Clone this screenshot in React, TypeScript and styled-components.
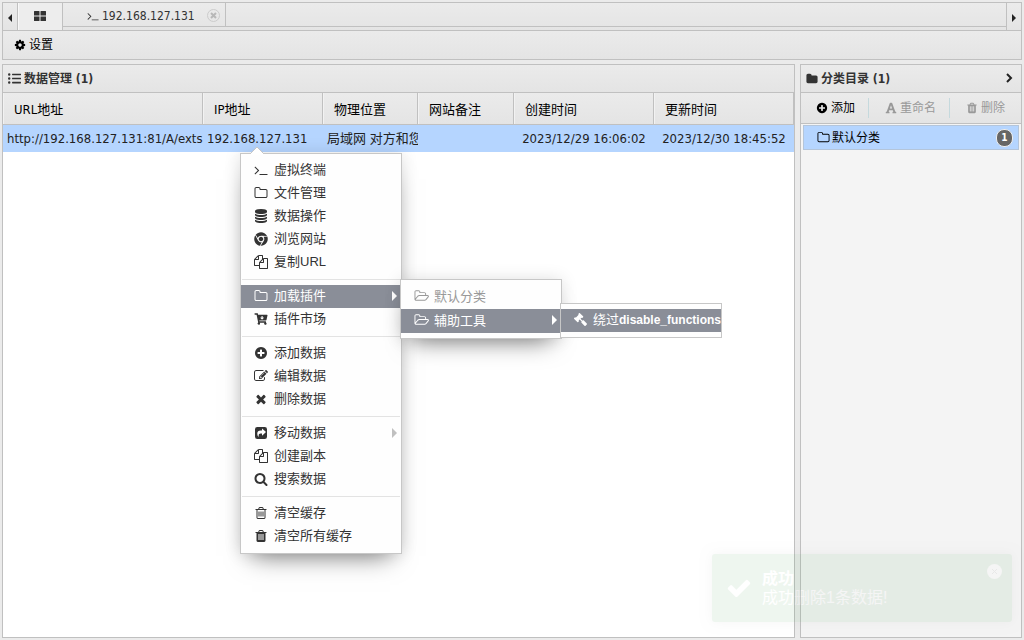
import React from 'react';
import styled, { createGlobalStyle, css } from 'styled-components';
import { FaCartArrowDown, FaChrome, FaFont, FaGavel, FaListUl } from 'react-icons/fa';

const line = '#c0c0c0';
const selected = '#b5d5ff';
const bar = 'linear-gradient(#ebebeb, #e4e4e4)';
const ui = "'DejaVu Sans Condensed', 'Noto Sans CJK SC', sans-serif";
const menuFont = "'Liberation Sans', 'Noto Sans CJK SC', sans-serif";

const Global = createGlobalStyle`
  * { box-sizing: border-box; }
  body { margin: 0; background: #ebebeb; font: 12px/16px ${ui}; color: #333; overflow: hidden; }
  button { font: inherit; color: inherit; background: none; border: 0; padding: 0; margin: 0; }
  h2, p { margin: 0; padding: 0; font: inherit; }
`;

const paths = {
  terminal: 'M649 983l-466 466q-10 10-23 10t-23-10l-50-50q-10-10-10-23t10-23l393-393-393-393q-10-10-10-23t10-23l50-50q10-10 23-10t23 10l466 466q10 10 10 23t-10 23zm1079 457v64q0 14-9 23t-23 9h-960q-14 0-23-9t-9-23v-64q0-14 9-23t23-9h960q14 0 23 9t9 23z',
  folderO: 'M1600 1312v-704q0-40-28-68t-68-28h-704q-40 0-68-28t-28-68v-64q0-40-28-68t-68-28h-320q-40 0-68 28t-28 68v960q0 40 28 68t68 28h1216q40 0 68-28t28-68zm128-704v704q0 92-66 158t-158 66h-1216q-92 0-158-66t-66-158v-960q0-92 66-158t158-66h320q92 0 158 66t66 158v32h672q92 0 158 66t66 158z',
  folder: 'M1728 608v704q0 92-66 158t-158 66h-1216q-92 0-158-66t-66-158v-960q0-92 66-158t158-66h320q92 0 158 66t66 158v32h672q92 0 158 66t66 158z',
  folderOpen: 'M1845 931q0-35-53-35h-1088q-40 0-85.500 21.500t-71.500 52.500l-294 363q-18 24-18 40 0 35 53 35h1088q40 0 86-22t71-53l294-363q18-22 18-39zm-1141-163h768v-160q0-40-28-68t-68-28h-576q-40 0-68-28t-28-68v-64q0-40-28-68t-68-28h-320q-40 0-68 28t-28 68v853l256-315q44-53 116-87.500t140-34.500zm1269 163q0 62-46 120l-295 363q-43 53-116 87.500t-140 34.500h-1088q-92 0-158-66t-66-158v-960q0-92 66-158t158-66h320q92 0 158 66t66 158v32h544q92 0 158 66t66 158v160h192q54 0 99 24.500t67 70.500q15 32 15 68z',
  database: 'M896 768q237 0 443-43t325-127v170q0 69-103 128t-280 93.500-385 34.500-385-34.500-280-93.500-103-128v-170q119 84 325 127t443 43zm0 768q237 0 443-43t325-127v170q0 69-103 128t-280 93.500-385 34.500-385-34.500-280-93.500-103-128v-170q119 84 325 127t443 43zm0-384q237 0 443-43t325-127v170q0 69-103 128t-280 93.500-385 34.500-385-34.500-280-93.500-103-128v-170q119 84 325 127t443 43zm0-1152q208 0 385 34.500t280 93.500 103 128v128q0 69-103 128t-280 93.500-385 34.500-385-34.500-280-93.500-103-128v-128q0-69 103-128t280-93.500 385-34.500z',
  copy: 'M1696 384q40 0 68 28t28 68v1216q0 40-28 68t-68 28h-960q-40 0-68-28t-28-68v-288h-544q-40 0-68-28t-28-68v-672q0-40 20-88t48-76l408-408q28-28 76-48t88-20h416q40 0 68 28t28 68v328q68-40 128-40h416zm-544 213l-299 299h299v-299zm-640-384l-299 299h299v-299zm196 647l316-316v-416h-384v416q0 40-28 68t-68 28h-416v640h512v-256q0-40 20-88t48-76zm956 804v-1152h-384v416q0 40-28 68t-68 28h-416v640h896z',
  plus: 'M1344 960v-128q0-26-19-45t-45-19h-256v-256q0-26-19-45t-45-19h-128q-26 0-45 19t-19 45v256h-256q-26 0-45 19t-19 45v128q0 26 19 45t45 19h256v256q0 26 19 45t45 19h128q26 0 45-19t19-45v-256h256q26 0 45-19t19-45zm320-64q0 209-103 385.500t-279.500 279.500-385.500 103-385.500-103-279.500-279.500-103-385.500 103-385.500 279.500-279.500 385.500-103 385.500 103 279.500 279.500 103 385.500z',
  edit: 'M888 1184l116-116-152-152-116 116v56h96v96h56zm440-720q-16-16-33 1l-350 350q-17 17-1 33t33-1l350-350q17-17 1-33zm80 594v190q0 119-84.500 203.500t-203.500 84.500h-832q-119 0-203.500-84.500t-84.500-203.500v-832q0-119 84.500-203.500t203.500-84.500h832q63 0 117 25 15 7 18 23 3 17-9 29l-49 49q-14 14-32 8-23-6-45-6h-832q-66 0-113 47t-47 113v832q0 66 47 113t113 47h832q66 0 113-47t47-113v-126q0-13 9-22l64-64q15-15 35-7t20 29zm-96-738l288 288-672 672h-288v-288zm444 132l-92 92-288-288 92-92q28-28 68-28t68 28l152 152q28 28 28 68t-28 68z',
  times: 'M1490 1322q0 40-28 68l-136 136q-28 28-68 28t-68-28l-294-294-294 294q-28 28-68 28t-68-28l-136-136q-28-28-28-68t28-68l294-294-294-294q-28-28-28-68t28-68l136-136q28-28 68-28t68 28l294 294 294-294q28-28 68-28t68 28l136 136q28 28 28 68t-28 68l-294 294 294 294q28 28 28 68z',
  share: 'M416 128h960q288 0 288 288v960q0 288-288 288h-960q-288 0-288-288v-960q0-288 288-288zm608 224v224h-160q-448 0-448 416 0 224 160 384 24 16 32-16-80-400 256-400h160v224q0 48 40 16l440-400q32-32 0-64l-440-400q-40-32-40 16z',
  search: 'M1216 832q0-185-131.500-316.500t-316.500-131.500-316.500 131.500-131.500 316.500 131.500 316.500 316.500 131.500 316.500-131.500 131.500-316.500zm512 832q0 52-38 90t-90 38q-54 0-90-38l-343-342q-179 124-399 124-143 0-273.500-55.500t-225-150-150-225-55.500-273.500 55.500-273.500 150-225 225-150 273.500-55.500 273.500 55.500 225 150 150 225 55.500 273.500q0 220-124 399l343 343q37 37 37 90z',
  trashO: 'M704 736v576q0 14-9 23t-23 9h-64q-14 0-23-9t-9-23v-576q0-14 9-23t23-9h64q14 0 23 9t9 23zm256 0v576q0 14-9 23t-23 9h-64q-14 0-23-9t-9-23v-576q0-14 9-23t23-9h64q14 0 23 9t9 23zm256 0v576q0 14-9 23t-23 9h-64q-14 0-23-9t-9-23v-576q0-14 9-23t23-9h64q14 0 23 9t9 23zm128 724v-948h-896v948q0 22 7 40.500t14.500 27 10.500 8.500h832q3 0 10.500-8.500t14.500-27 7-40.500zm-672-1076h448l-48-117q-7-9-17-11h-317q-10 2-17 11zm928 32v64q0 14-9 23t-23 9h-96v948q0 83-47 143.500t-113 60.500h-832q-66 0-113-58.500t-47-141.500v-952h-96q-14 0-23-9t-9-23v-64q0-14 9-23t23-9h309l70-167q15-37 54-63t79-26h320q40 0 79 26t54 63l70 167h309q14 0 23 9t9 23z',
  trash: 'M704 1376v-704q0-14-9-23t-23-9h-64q-14 0-23 9t-9 23v704q0 14 9 23t23 9h64q14 0 23-9t9-23zm256 0v-704q0-14-9-23t-23-9h-64q-14 0-23 9t-9 23v704q0 14 9 23t23 9h64q14 0 23-9t9-23zm256 0v-704q0-14-9-23t-23-9h-64q-14 0-23 9t-9 23v704q0 14 9 23t23 9h64q14 0 23-9t9-23zm-544-992h448l-48-117q-7-9-17-11h-317q-10 2-17 11zm928 32v64q0 14-9 23t-23 9h-96v948q0 83-47 143.500t-113 60.500h-832q-66 0-113-58.500t-47-141.500v-952h-96q-14 0-23-9t-9-23v-64q0-14 9-23t23-9h309l70-167q15-37 54-63t79-26h320q40 0 79 26t54 63l70 167h309q14 0 23 9t9 23z',
  check: 'M1671 566q0 40-28 68l-724 724-136 136q-28 28-68 28t-68-28l-136-136-362-362q-28-28-28-68t28-68l136-136q28-28 68-28t68 28l294 295 656-657q28-28 68-28t68 28l136 136q28 28 28 68z',
  cog: 'M1152 896q0-106-75-181t-181-75-181 75-75 181 75 181 181 75 181-75 75-181zm512-109v222q0 12-8 23t-20 13l-185 28q-19 54-39 91 35 50 107 138 10 12 10 25t-9 23q-27 37-99 108t-94 71q-12 0-26-9l-138-108q-44 23-91 38-16 136-29 186-7 28-36 28h-222q-14 0-24.500-8.500t-11.500-21.500l-28-184q-49-16-90-37l-141 107q-10 9-25 9-14 0-25-11-126-114-165-168-7-10-7-23 0-12 8-23 15-21 51-66.500t54-70.500q-27-50-41-99l-183-27q-13-2-21-12.500t-8-23.500v-222q0-12 8-23t19-13l186-28q14-46 39-92-40-57-107-138-10-12-10-24 0-10 9-23 26-36 98.500-107.500t94.500-71.500q13 0 26 10l138 107q44-23 91-38 16-136 29-186 7-28 36-28h222q14 0 24.500 8.500t11.500 21.500l28 184q49 16 90 37l142-107q9-9 24-9 13 0 25 10 129 119 165 170 7 8 7 22 0 12-8 23-15 21-51 66.500t-54 70.500q26 50 41 98l183 28q13 2 21 12.500t8 23.500z',
  grid: 'M192 256h576q64 0 64 64v512h-704v-512q0-64 64-64zM1024 256h576q64 0 64 64v512h-704v-512q0-64 64-64zM128 960h704v512q0 64-64 64h-576q-64 0-64-64zM960 960h704v512q0 64-64 64h-576q-64 0-64-64z',
};
type Name = keyof typeof paths;

const Svg = styled.svg`
  flex: none;
  display: block;
  fill: currentColor;
`;
function Icon({ name, size = 14 }: { name: Name; size?: number }) {
  const wide = name === 'folderOpen';
  return (
    <Svg width={wide ? size + 1 : size} height={size} viewBox={wide ? '0 0 1984 1792' : '0 0 1792 1792'} fillRule="evenodd" aria-hidden="true">
      <path d={paths[name]} />
    </Svg>
  );
}

const Page = styled.div`
  position: relative;
  height: 100vh;
  padding: 2px;
  display: flex;
  flex-direction: column;
`;

const TabBar = styled.nav`
  display: flex;
  height: 28px;
  border: 1px solid ${line};
  border-bottom: 0;
  background: ${bar};
`;
const Scroller = styled.button<{ $side: 'left' | 'right' }>`
  width: 15px;
  padding-top: 2px;
  display: flex;
  align-items: center;
  justify-content: center;
  ${p => (p.$side === 'left' ? 'border-right' : 'border-left')}: 1px solid ${line};
`;
const Tab = styled.button<{ $active?: boolean }>`
  display: flex;
  align-items: center;
  height: ${p => (p.$active ? 27 : 24)}px;
  border-right: 1px solid ${line};
  ${p =>
    p.$active
      ? css`
          width: 45px;
          padding-bottom: 2px;
          justify-content: center;
          background: #ededed;
          box-shadow: inset 1px 0 #f8f8f8;
        `
      : css`
          border-bottom: 1px solid ${line};
          padding: 2px 5px 0 24px;
          gap: 3px;
          width: 163px;
        `}
`;
const TabClose = styled.span`
  margin-left: auto;
  width: 13px;
  height: 13px;
  display: grid;
  place-items: center;
  border: 1px solid #ccc;
  border-radius: 50%;
  color: #b8b8b8;
`;
const TabRest = styled.div`
  flex: 1;
  height: 24px;
  border-bottom: 1px solid ${line};
`;

const Toolbar = styled.div`
  height: 30px;
  padding: 0 11px;
  border: 1px solid ${line};
  background: ${bar};
  display: flex;
  align-items: center;
`;
const ToolButton = styled.button`
  display: flex;
  align-items: center;
  gap: 3px;
  color: #000;
  &:disabled { color: #999; }
`;

const Main = styled.main`
  flex: 1;
  min-height: 0;
  margin-top: 4px;
  display: flex;
  gap: 5px;
`;
const Panel = styled.section<{ $side?: boolean }>`
  flex: ${p => (p.$side ? '0 0 222px' : '1')};
  min-width: 0;
  border: 1px solid ${line};
  background: ${p => (p.$side ? '#f4f4f4' : '#fff')};
`;
const PanelHead = styled.header`
  height: 28px;
  padding: 0 7px 0 5px;
  display: flex;
  align-items: center;
  gap: 3px;
  background: ${bar};
  border-bottom: 1px solid ${line};
  h2 { font-weight: 700; }
  button { margin-left: auto; }
`;

const Grid = styled.table`
  width: 100%;
  table-layout: fixed;
  border-collapse: separate;
  border-spacing: 0;
  font-size: 13px;
  color: #000;
  th {
    height: 32px;
    padding: 2px 11px 0;
    text-align: left;
    font-weight: 400;
    background: ${bar};
    border-right: 1px solid ${line};
    border-bottom: 1px solid ${line};
    box-shadow: inset 1px 0 #f2f2f2;
  }
  td {
    height: 27px;
    padding: 0;
    background: ${selected};
    white-space: nowrap;
    overflow: hidden;
    color: #222;
  }
`;
const TextCell = styled.td`
  && { padding-left: 4px; }
`;
const DateCell = styled.td`
  text-align: center;
`;

const SideTools = styled.div`
  height: 31px;
  padding: 0 15px;
  display: flex;
  align-items: center;
  background: ${bar};
  border-bottom: 1px solid ${line};
`;
const Rule = styled.span`
  width: 1px;
  height: 20px;
  margin: 0 16px 0 13px;
  background: #c5d9dd;
`;
const Category = styled.button`
  width: calc(100% - 4px);
  height: 25px;
  margin: 1px 2px;
  padding: 0 5px 0 13px;
  display: flex;
  align-items: center;
  gap: 2px;
  color: #000;
  background: ${selected};
  border: 1px solid #b4c5da;
`;
const Badge = styled.span`
  margin-left: auto;
  width: 17px;
  height: 18px;
  border: 1px solid #eee;
  border-radius: 8px;
  background: #666;
  color: #fff;
  font: bold 10px/16px ${ui};
  text-align: center;
`;

const Menu = styled.div<{ $x: number; $y: number; $flat?: boolean }>`
  position: absolute;
  left: ${p => p.$x}px;
  top: ${p => p.$y}px;
  width: 162px;
  padding: 5px 0;
  border: 1px solid #c7c7c7;
  background: #fefefe;
  font: 13px/21px ${menuFont};
  box-shadow: ${p => (p.$flat ? 'none' : '0 0 16px rgba(0, 0, 0, 0.12), 0 14px 24px -12px rgba(0, 0, 0, 0.5)')};
`;
const Notch = styled.svg`
  position: absolute;
  left: 9px;
  top: -7px;
`;
const Item = styled.button<{ $on?: boolean }>`
  width: 100%;
  height: 23px;
  padding: 0 3px 2px 13px;
  display: flex;
  align-items: center;
  gap: 6px;
  white-space: nowrap;
  color: ${p => (p.$on ? '#fff' : '#333')};
  background: ${p => (p.$on ? '#8a8e98' : 'transparent')};
  &:disabled { color: #999; }
  svg { flex: none; }
`;
const SubItem = styled(Item)`
  height: 24px;
  gap: 5px;
`;
const PluginItem = styled(Item)`
  padding-right: 0;
  b { font-size: 12px; }
`;
const Gavel = styled(FaGavel)`
  transform: scaleX(-1);
`;
const Arrow = styled.svg`
  margin-left: auto;
  fill: currentColor;
`;
const Divider = styled.hr`
  height: 1px;
  margin: 5px 1px;
  border: 0;
  background: #e3e3e3;
`;

const Toast = styled.aside`
  position: absolute;
  right: 12px;
  bottom: 18px;
  width: 300px;
  height: 68px;
  padding: 15px 15px 15px 14px;
  display: flex;
  align-items: center;
  gap: 10px;
  border-radius: 3px;
  background: #51a35a;
  color: #fff;
  opacity: 0.09;
  box-shadow: 0 0 12px #999;
  font: 16px/19px ${menuFont};
  strong { display: block; }
`;
const ToastClose = styled.button`
  align-self: flex-start;
  margin: -5px -5px 0 auto;
  width: 15px;
  height: 15px;
  display: grid;
  place-items: center;
  border-radius: 50%;
  background: #fff;
  color: #777;
`;

function Triangle({ dim }: { dim?: boolean }) {
  return (
    <Arrow width="6" height="10" viewBox="0 0 6 10" opacity={dim ? 0.3 : 1} aria-hidden="true">
      <path d="M0 0L5 5L0 10z" />
    </Arrow>
  );
}

type Entry = { icon: React.ReactNode; label: string; on?: boolean; sub?: boolean };
const groups: Entry[][] = [
  [
    { icon: <Icon name="terminal" />, label: '虚拟终端' },
    { icon: <Icon name="folderO" />, label: '文件管理' },
    { icon: <Icon name="database" />, label: '数据操作' },
    { icon: <FaChrome size={14} />, label: '浏览网站' },
    { icon: <Icon name="copy" />, label: '复制URL' },
  ],
  [
    { icon: <Icon name="folderO" />, label: '加载插件', on: true, sub: true },
    { icon: <FaCartArrowDown size={14} viewBox="-20 -20 616 552" />, label: '插件市场' },
  ],
  [
    { icon: <Icon name="plus" />, label: '添加数据' },
    { icon: <Icon name="edit" />, label: '编辑数据' },
    { icon: <Icon name="times" />, label: '删除数据' },
  ],
  [
    { icon: <Icon name="share" />, label: '移动数据', sub: true },
    { icon: <Icon name="copy" />, label: '创建副本' },
    { icon: <Icon name="search" />, label: '搜索数据' },
  ],
  [
    { icon: <Icon name="trashO" />, label: '清空缓存' },
    { icon: <Icon name="trash" />, label: '清空所有缓存' },
  ],
];

const columns = ['URL地址', 'IP地址', '物理位置', '网站备注', '创建时间', '更新时间'];
const widths = [undefined, 120, 95, 96, 140, 140];

export default function App() {
  return (
    <Page>
      <Global />
      <TabBar>
        <Scroller $side="left" aria-label="向左">
          <svg width="4" height="8" viewBox="0 0 4 8"><path d="M4 0L0 4L4 8z" fill="#222" /></svg>
        </Scroller>
        <Tab $active aria-label="主页"><Icon name="grid" /></Tab>
        <Tab>
          <Icon name="terminal" size={12} />
          192.168.127.131
          <TabClose>
            <svg width="7" height="7" viewBox="0 0 7 7"><path d="M1 1L6 6M6 1L1 6" stroke="currentColor" strokeWidth="2" /></svg>
          </TabClose>
        </Tab>
        <TabRest />
        <Scroller $side="right" aria-label="向右">
          <svg width="4" height="8" viewBox="0 0 4 8"><path d="M0 0L4 4L0 8z" fill="#222" /></svg>
        </Scroller>
      </TabBar>
      <Toolbar>
        <ToolButton><Icon name="cog" size={12} />设置</ToolButton>
      </Toolbar>
      <Main>
        <Panel>
          <PanelHead><FaListUl size={13} /><h2>数据管理 (1)</h2></PanelHead>
          <Grid>
            <colgroup>
              {widths.map((w, i) => <col key={i} width={w} />)}
            </colgroup>
            <thead>
              <tr>{columns.map(c => <th key={c}>{c}</th>)}</tr>
            </thead>
            <tbody>
              <tr>
                <TextCell>http://192.168.127.131:81/A/exts</TextCell>
                <TextCell>192.168.127.131</TextCell>
                <TextCell>局域网 对方和您</TextCell>
                <TextCell />
                <DateCell>2023/12/29 16:06:02</DateCell>
                <DateCell>2023/12/30 18:45:52</DateCell>
              </tr>
            </tbody>
          </Grid>
        </Panel>
        <Panel $side>
          <PanelHead>
            <Icon name="folder" size={12} />
            <h2>分类目录 (1)</h2>
            <button aria-label="收起">
              <svg width="9" height="10" viewBox="0 0 9 10"><path d="M2 1L6 5L2 9" fill="none" stroke="#222" strokeWidth="2" /></svg>
            </button>
          </PanelHead>
          <SideTools>
            <ToolButton><Icon name="plus" size={12} />添加</ToolButton>
            <Rule />
            <ToolButton disabled><FaFont size={12} />重命名</ToolButton>
            <Rule />
            <ToolButton disabled><Icon name="trash" size={12} />删除</ToolButton>
          </SideTools>
          <Category><Icon name="folderO" size={13} />默认分类<Badge>1</Badge></Category>
        </Panel>
      </Main>

      <Menu $x={240} $y={153}>
        <Notch width="14" height="8" viewBox="0 0 14 8">
          <path d="M0 8L0 7L7 0L14 7L14 8z" fill="#fff" />
          <path d="M0 7L7 0L14 7" fill="none" stroke="#c7c7c7" />
        </Notch>
        {groups.map((group, i) => (
          <React.Fragment key={i}>
            {i > 0 && <Divider />}
            {group.map(e => (
              <Item key={e.label} $on={e.on}>
                {e.icon}
                {e.label}
                {e.sub && <Triangle dim={!e.on} />}
              </Item>
            ))}
          </React.Fragment>
        ))}
      </Menu>
      <Menu $x={400} $y={279}>
        <SubItem disabled><Icon name="folderOpen" />默认分类</SubItem>
        <SubItem $on><Icon name="folderOpen" />辅助工具<Triangle /></SubItem>
      </Menu>
      <Menu $x={560} $y={303} $flat>
        <PluginItem $on><Gavel size={13} /><span>绕过<b>disable_functions</b></span></PluginItem>
      </Menu>

      <Toast>
        <Icon name="check" size={26} />
        <p><strong>成功</strong>成功删除1条数据!</p>
        <ToastClose aria-label="关闭">
          <svg width="5" height="5" viewBox="0 0 5 5"><path d="M0 0L5 5M5 0L0 5" stroke="currentColor" /></svg>
        </ToastClose>
      </Toast>
    </Page>
  );
}
